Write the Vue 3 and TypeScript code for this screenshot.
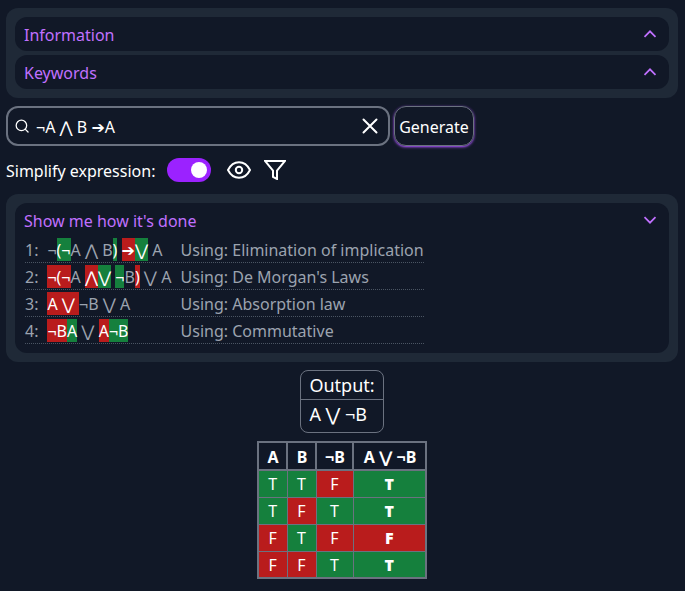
<script setup lang="ts">
import { ref } from 'vue'

type Change = 'same' | 'added' | 'removed'
interface Segment {
  text: string
  kind: Change
}
interface Step {
  parts: Segment[]
  law: string
}

const s = (text: string): Segment => ({ text, kind: 'same' })
const a = (text: string): Segment => ({ text, kind: 'added' })
const r = (text: string): Segment => ({ text, kind: 'removed' })

const expression = ref('¬A ⋀ B ➔A')
const simplify = ref(true)
const sections = ['Information', 'Keywords']

const steps: Step[] = [
  { parts: [s('¬'), a('(¬'), s('A ⋀ B'), a(')'), s(' '), r('➔'), a('⋁'), s(' A')], law: 'Elimination of implication' },
  { parts: [r('¬(¬'), s('A '), r('⋀'), a('⋁'), s(' '), a('¬'), s('B'), r(')'), s(' ⋁ A')], law: "De Morgan's Laws" },
  { parts: [r('A ⋁ '), s('¬B ⋁ A')], law: 'Absorption law' },
  { parts: [r('¬B'), a('A'), s(' ⋁ '), r('A'), a('¬B')], law: 'Commutative' },
]

const headers = ['A', 'B', '¬B', 'A ⋁ ¬B']
const rows: boolean[][] = [
  [true, true, false, true],
  [true, false, true, true],
  [false, true, false, false],
  [false, false, true, true],
]
</script>

<template>
  <main class="page">
    <section class="panel">
      <button v-for="title in sections" :key="title" class="disclosure">
        <span>{{ title }}</span>
        <svg class="chevron" viewBox="0 0 20 20"><path d="M4.5 12.8 10 7.3l5.5 5.5" /></svg>
      </button>
    </section>

    <form class="search" @submit.prevent>
      <label class="field">
        <svg class="magnifier" viewBox="0 0 24 24"><circle cx="11" cy="11" r="9" /><path d="m17.400 17.400 5 5" /></svg>
        <input v-model="expression" type="text" spellcheck="false" />
        <svg class="clear" viewBox="0 0 16 16"><path d="m1.500 1.500 13 13m0-13-13 13" /></svg>
      </label>
      <button class="generate">Generate</button>
    </form>

    <div class="options">
      <span>Simplify expression:</span>
      <button class="switch" :class="{ on: simplify }" @click="simplify = !simplify"><i class="knob" /></button>
      <svg class="eye" viewBox="0 0 24 18">
        <path d="M1 9C3.500 4 7.500 1.200 12 1.200S20.500 4 23 9c-2.500 5-6.500 7.800-11 7.800S3.500 14 1 9z" />
        <circle cx="12" cy="9" r="3.200" />
      </svg>
      <svg class="funnel" viewBox="0 0 22 20"><path d="M1 1h20l-8 9.500V19l-4-2v-6.500z" /></svg>
    </div>

    <section class="panel">
      <div class="details">
        <div class="details-head">
          <span>Show me how it's done</span>
          <svg class="chevron" viewBox="0 0 20 20"><path d="M4.500 7.200 10 12.700l5.500-5.500" /></svg>
        </div>
        <ol class="steps">
          <li v-for="(step, i) in steps" :key="i">
            <span class="num">{{ i + 1 }}:</span>
            <span class="expr"><span v-for="(part, j) in step.parts" :key="j" :class="part.kind">{{ part.text }}</span></span>
            <span class="law">Using: {{ step.law }}</span>
          </li>
        </ol>
      </div>
    </section>

    <section class="output">
      <div class="output-title">Output:</div>
      <div class="output-value">A ⋁ ¬B</div>
    </section>

    <table class="truth">
      <thead>
        <tr><th v-for="h in headers" :key="h">{{ h }}</th></tr>
      </thead>
      <tbody>
        <tr v-for="(row, i) in rows" :key="i">
          <td v-for="(value, j) in row" :key="j" :class="value ? 'yes' : 'no'">{{ value ? 'T' : 'F' }}</td>
        </tr>
      </tbody>
    </table>
  </main>
</template>

<style>
body {
  background: #111827;
}
</style>

<style scoped>
* {
  box-sizing: border-box;
}
.page {
  display: flex;
  flex-direction: column;
  width: 685px;
  min-height: 591px;
  padding: 8px 7px 12px 6px;
  background: #111827;
  color: #fff;
  font: 16px/24px 'Noto Sans', 'DejaVu Sans', sans-serif;
}
button,
input {
  margin: 0;
  padding: 0;
  border: 0;
  background: none;
  color: inherit;
  font: inherit;
}
svg {
  flex: none;
  fill: none;
  stroke: currentColor;
}
.panel {
  display: flex;
  flex-direction: column;
  gap: 4px;
  padding: 9px;
  border-radius: 12px;
  background: #1f2937;
}
.disclosure,
.details {
  border-radius: 12px;
  background: #111827;
}
.disclosure,
.details-head {
  display: flex;
  align-items: center;
  justify-content: space-between;
  height: 34px;
  padding: 2px 9px 0;
  color: #c070ff;
}
.chevron {
  width: 20px;
  height: 20px;
  margin-top: -2px;
  stroke-width: 1.700;
}
.search {
  display: flex;
  gap: 4px;
  margin-top: 8px;
}
.field {
  display: flex;
  align-items: center;
  width: 384px;
  height: 40px;
  padding: 0 10px 0 7px;
  border: 2px solid #6b7280;
  border-radius: 12px;
}
.magnifier {
  width: 14px;
  height: 14px;
  margin-top: -1px;
  stroke-width: 2.200;
  stroke-linecap: round;
}
.field input {
  flex: 1;
  min-width: 0;
  height: 24px;
  margin-left: 7px;
  padding-top: 2px;
  outline: none;
}
.clear {
  width: 16px;
  height: 16px;
  stroke-width: 2;
  stroke-linecap: round;
}
.generate {
  width: 80px;
  height: 40px;
  padding-top: 2px;
  border: 1px solid #6b7280;
  border-radius: 12px;
  box-shadow: 0 1px 3px #a855f7, 0 1px 2px -1px #a855f7;
}
.options {
  display: flex;
  align-items: center;
  height: 48px;
}
.options span {
  width: 161px;
  padding-top: 2px;
}
.switch {
  width: 44px;
  height: 24px;
  padding: 4px;
  border-radius: 12px;
  background: #4b5563;
}
.switch.on {
  padding-left: 24px;
  background: #9b22ff;
}
.knob {
  display: block;
  width: 16px;
  height: 16px;
  border-radius: 50%;
  background: #fff;
}
.eye {
  width: 24px;
  height: 18px;
  margin-left: 16px;
  stroke-width: 2;
}
.funnel {
  width: 22px;
  height: 20px;
  margin-left: 13px;
  stroke-width: 2;
}
.details {
  height: 150px;
}
.steps {
  width: 399px;
  margin: -1px 0 0 10px;
  padding: 0;
  list-style: none;
  color: #9ca3af;
}
.steps li {
  display: grid;
  grid-template-columns: 22.400px 133.200px 1fr;
  height: 27px;
  padding-top: 2px;
  border-bottom: 1px dotted #4b5563;
}
.expr {
  white-space: pre;
}
.law {
  white-space: nowrap;
}
.added,
.removed {
  padding-top: 1px;
  color: #fff;
}
.added,
.yes {
  background: #15803d;
}
.removed,
.no {
  background: #b91c1c;
}
.output {
  align-self: center;
  width: 84px;
  height: 63px;
  margin-top: 8px;
  border: 1px solid #6b7280;
  border-radius: 8px;
  font-size: 18px;
  line-height: 28px;
}
.output-title {
  height: 29px;
  padding-left: 8.400px;
  border-bottom: 1px solid #6b7280;
}
.output-value {
  padding-left: 8.400px;
}
.truth {
  align-self: center;
  width: 170px;
  height: 138px;
  margin-top: 8px;
  border: 2px solid #6b7280;
  border-collapse: collapse;
  table-layout: fixed;
  text-align: center;
}
.truth th {
  height: 28px;
  padding: 2px 0 0 1px;
  border: 2px solid #6b7280;
  line-height: 24px;
  white-space: nowrap;
}
.truth td {
  height: 27px;
  padding: 0;
  border: 1px solid #6b7280;
}
.truth th:nth-child(1),
.truth th:nth-child(2) {
  width: 29px;
}
.truth th:nth-child(3) {
  width: 37px;
}
.truth tr:last-child td {
  padding-top: 1px;
}
.truth td:last-child {
  font-weight: 900;
}
</style>
